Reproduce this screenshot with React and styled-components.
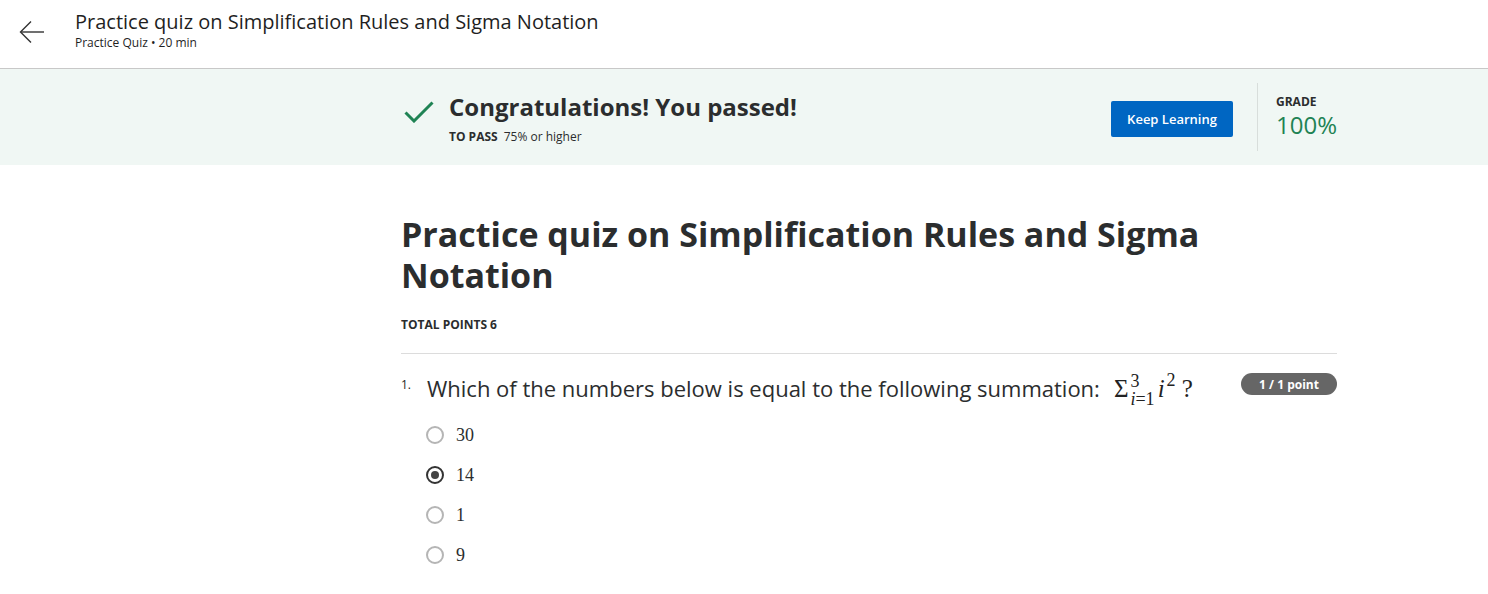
import React, { useState } from "react";
import styled, { createGlobalStyle } from "styled-components";

const GlobalStyle = createGlobalStyle`
  body {
    margin: 0;
    font-family: "Open Sans", "Noto Sans", sans-serif;
    color: #1f1f1f;
    background: #fff;
  }
`;

const Header = styled.header`
  display: flex;
  align-items: center;
  height: 68px;
  border-bottom: 1px solid #c8c8c8;
  padding-left: 18px;
`;

const BackButton = styled.div`
  width: 28px;
  height: 28px;
  margin-right: 29px;
  margin-top: -4px;
  display: flex;
  align-items: center;
  justify-content: center;
`;

const HeaderText = styled.div`
  display: flex;
  flex-direction: column;
  margin-top: -8px;
`;

const HeaderTitle = styled.div`
  font-size: 20px;
  line-height: 26px;
  color: #1f1f1f;
`;

const HeaderSub = styled.div`
  font-size: 12px;
  line-height: 16px;
  color: #1f1f1f;
`;

// the page keeps a 250px side column on the left, the content is centred in the rest
const Track = styled.div`
  display: flex;
  justify-content: center;
  padding-left: 250px;
`;

const Banner = styled(Track)`
  background: #f0f7f4;
  height: 96px;
`;

const BannerInner = styled.div`
  width: 936px;
  display: flex;
  align-items: center;
`;

const PassBlock = styled.div`
  flex: 1;
  display: flex;
  align-items: flex-start;
  margin-top: 2px;
`;

const Check = styled.div`
  width: 30px;
  margin: 10px 15px 0 3px;
`;

const PassText = styled.div`
  display: flex;
  flex-direction: column;
`;

const PassTitle = styled.div`
  font-size: 24px;
  font-weight: 700;
  line-height: 32px;
  color: #2b2d2e;
`;

const PassMeta = styled.div`
  font-size: 12px;
  line-height: 16px;
  margin-top: 6px;
  color: #2b2d2e;
  b {
    font-weight: 700;
    margin-right: 6px;
  }
`;

const KeepButton = styled.button`
  background: #0066c2;
  color: #fff;
  border: none;
  border-radius: 2px;
  width: 122px;
  height: 36px;
  font-family: inherit;
  font-size: 13px;
  font-weight: 600;
  margin-top: 4px;
  cursor: pointer;
`;

const GradeBlock = styled.div`
  margin-left: 24px;
  border-left: 1px solid #d8dedb;
  height: 68px;
  padding-left: 18px;
  width: 61px;
  display: flex;
  flex-direction: column;
  justify-content: center;
`;

const GradeLabel = styled.div`
  font-size: 12px;
  font-weight: 700;
  line-height: 14px;
  color: #2b2d2e;
`;

const GradeValue = styled.div`
  font-size: 24px;
  line-height: 28px;
  margin-top: 2px;
  color: #1f8354;
`;

const Main = styled.main`
  width: 936px;
  padding-top: 49px;
`;

const Title = styled.h1`
  font-size: 34px;
  font-weight: 700;
  line-height: 41px;
  margin: 0;
  color: #2b2d2e;
  width: 830px;
`;

const TotalPoints = styled.div`
  font-size: 12px;
  font-weight: 700;
  line-height: 16px;
  margin-top: 21px;
  padding-bottom: 20px;
  border-bottom: 1px solid #dcdcdc;
  color: #2b2d2e;
`;

const QuestionRow = styled.div`
  display: flex;
  align-items: flex-start;
  margin-top: 18px;
`;

const QNum = styled.div`
  font-size: 12px;
  width: 26px;
  margin-top: 4px;
`;

const QText = styled.div`
  flex: 1;
  font-size: 22px;
  line-height: 32px;
  height: 32px;
  color: #2b2d2e;
`;

const MathExpr = styled.span`
  font-family: "Liberation Serif", "DejaVu Serif", serif;
  font-size: 25px;
  margin-left: 14px;
  color: #222;
`;

const Scripts = styled.span`
  display: inline-flex;
  flex-direction: column;
  font-size: 18px;
  line-height: 18px;
  vertical-align: 10px;
  margin: 0 3px 0 2px;
`;

const Var = styled.i`
  font-style: italic;
`;

const Power = styled.sup`
  font-size: 18px;
  line-height: 0;
  vertical-align: 11px;
  margin-left: 2px;
`;

const Badge = styled.div`
  background: #666;
  color: #fff;
  font-size: 12px;
  font-weight: 700;
  border-radius: 12px;
  height: 22px;
  width: 96px;
  display: flex;
  align-items: center;
  justify-content: center;
  margin-top: 1px;
`;

const Options = styled.div`
  display: flex;
  flex-direction: column;
  padding-left: 25px;
  margin-top: 20px;
  gap: 18px;
`;

const Option = styled.label`
  display: flex;
  align-items: center;
  height: 22px;
  font-family: "Liberation Serif", "DejaVu Serif", serif;
  font-size: 18px;
  color: #2b2d2e;
  cursor: pointer;
`;

const Radio = styled.span`
  width: 18px;
  height: 18px;
  box-sizing: border-box;
  border-radius: 50%;
  border: 2px solid ${(p) => (p.checked ? "#333" : "#b5b5b5")};
  margin-right: 12px;
  display: flex;
  align-items: center;
  justify-content: center;
  &::after {
    content: "";
    display: ${(p) => (p.checked ? "block" : "none")};
    width: 8px;
    height: 8px;
    border-radius: 50%;
    background: #444;
  }
`;

const answers = ["30", "14", "1", "9"];

const App = () => {
  const [selected, setSelected] = useState(1);

  return (
    <>
      <GlobalStyle />
      <Header>
        <BackButton>
          <svg width="28" height="28" viewBox="0 0 28 28" fill="none" stroke="#333" strokeWidth="1.4">
            <path d="M26 14H3" />
            <path d="M13 3.5L2.5 14L13 24.5" />
          </svg>
        </BackButton>
        <HeaderText>
          <HeaderTitle>Practice quiz on Simplification Rules and Sigma Notation</HeaderTitle>
          <HeaderSub>Practice Quiz • 20 min</HeaderSub>
        </HeaderText>
      </Header>

      <Banner>
        <BannerInner>
          <PassBlock>
            <Check>
              <svg width="30" height="22" viewBox="0 0 30 22" fill="none" stroke="#1f8354" strokeWidth="3">
                <path d="M1.5 11.5L10 20L28.5 1.5" />
              </svg>
            </Check>
            <PassText>
              <PassTitle>Congratulations! You passed!</PassTitle>
              <PassMeta>
                <b>TO PASS</b>75% or higher
              </PassMeta>
            </PassText>
          </PassBlock>
          <KeepButton>Keep Learning</KeepButton>
          <GradeBlock>
            <GradeLabel>GRADE</GradeLabel>
            <GradeValue>100%</GradeValue>
          </GradeBlock>
        </BannerInner>
      </Banner>

      <Track>
        <Main>
          <Title>Practice quiz on Simplification Rules and Sigma Notation</Title>
          <TotalPoints>TOTAL POINTS 6</TotalPoints>
          <QuestionRow>
            <QNum>1.</QNum>
            <QText>
              Which of the numbers below is equal to the following summation:
              <MathExpr>
                Σ
                <Scripts>
                  <span>3</span>
                  <span>
                    <Var>i</Var>=1
                  </span>
                </Scripts>
                <Var>i</Var>
                <Power>2</Power> ?
              </MathExpr>
            </QText>
            <Badge>1 / 1 point</Badge>
          </QuestionRow>
          <Options>
            {answers.map((a, i) => (
              <Option key={a} onClick={() => setSelected(i)}>
                <Radio checked={selected === i} />
                {a}
              </Option>
            ))}
          </Options>
        </Main>
      </Track>
    </>
  );
};

export default App;
